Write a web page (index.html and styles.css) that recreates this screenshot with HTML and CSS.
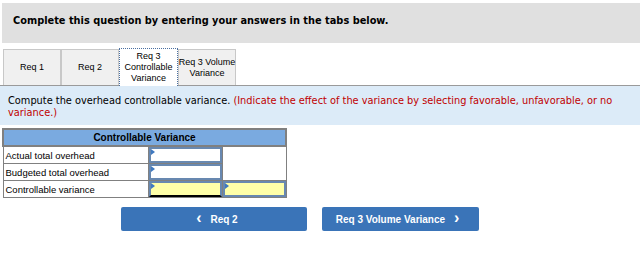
FILE: index.html
```html
<!DOCTYPE html>
<html lang="en">
<head>
    <meta charset="UTF-8">
    <title>Controllable Variance</title>
    <link rel="stylesheet" href="styles.css">
</head>
<body>
    <div class="prompt">Complete this question by entering your answers in the tabs below.</div>

    <div class="tabs">
        <div class="tab">Req 1</div>
        <div class="tab">Req 2</div>
        <div class="tab active">Req 3<br>Controllable<br>Variance</div>
        <div class="tab">Req 3 Volume<br>Variance</div>
    </div>

    <div class="instructions">
        Compute the overhead controllable variance. <span class="hint">(Indicate the effect of the variance by selecting favorable, unfavorable, or no variance.)</span>
    </div>

    <table class="variance">
        <colgroup>
            <col class="col-label">
            <col class="col-input">
            <col class="col-pick">
        </colgroup>
        <tr>
            <th colspan="3">Controllable Variance</th>
        </tr>
        <tr>
            <td class="label">Actual total overhead</td>
            <td class="cell"><div class="input"></div></td>
            <td class="empty" rowspan="2"></td>
        </tr>
        <tr>
            <td class="label">Budgeted total overhead</td>
            <td class="cell"><div class="input"></div></td>
        </tr>
        <tr>
            <td class="label">Controllable variance</td>
            <td class="cell"><div class="input total"></div></td>
            <td class="cell"><div class="input pick"></div></td>
        </tr>
    </table>

    <div class="nav">
        <button class="nav-btn prev"><span class="arrow">&lsaquo;</span> Req 2</button>
        <button class="nav-btn next">Req 3 Volume Variance <span class="arrow">&rsaquo;</span></button>
    </div>
</body>
</html>
```

FILE: styles.css
```css
* {
    margin: 0;
    padding: 0;
    box-sizing: border-box;
}

body {
    font-family: "DejaVu Sans", Verdana, sans-serif;
    color: #000;
    background: #fff;
}

.prompt {
    margin: 3px 0 0 2px;
    height: 40px;
    background: #e0e0e0;
    padding: 12px 0 0 11px;
    font-size: 9.8px;
    font-weight: bold;
}

.tabs {
    display: flex;
    align-items: flex-end;
    margin-top: 5px;
    padding-left: 3px;
    height: 38px;
    border-bottom: 1px solid #9a9a9a;
}

.tab {
    width: 58px;
    height: 36px;
    display: flex;
    align-items: center;
    justify-content: center;
    text-align: center;
    white-space: nowrap;
    font-family: "Liberation Sans", Arial, sans-serif;
    font-size: 9px;
    line-height: 11px;
    background: #f0f0f0;
    border: 1px solid #c8c8c8;
    border-bottom: none;
}

.tab.active {
    width: 59px;
    height: 38px;
    margin-bottom: -1px;
    background: #fff;
    border: 1px dotted #4a6fa0;
    border-bottom: none;
}

.instructions {
    background: #dcebf8;
    height: 39px;
    padding: 9px 8px 0;
    font-size: 9.8px;
    line-height: 12px;
}

.hint {
    color: #c00000;
}

.variance {
    margin: 3px 0 0 2px;
    width: 283px;
    table-layout: fixed;
    border-collapse: collapse;
    font-family: "Liberation Sans", Arial, sans-serif;
    font-size: 9.5px;
}

.col-label {
    width: 145px;
}

.col-input {
    width: 74px;
}

.col-pick {
    width: 64px;
}

.variance th {
    height: 17px;
    background: #7aaae0;
    border: 2px solid #808080;
    font-weight: bold;
    font-size: 10px;
}

.variance td {
    border: 1px solid #808080;
    height: 17px;
}

.variance .label {
    padding-left: 2px;
    white-space: nowrap;
}

.variance .cell {
    padding: 0;
}

.input {
    position: relative;
    height: 16px;
    border: 2px solid #6888b0;
    background: #fff;
}

.input::before {
    content: "";
    position: absolute;
    top: 0;
    left: 0;
    border-top: 3px solid transparent;
    border-bottom: 3px solid transparent;
    border-left: 4px solid #3f79c0;
}

.input.total {
    background: #ffffa8;
    border-bottom-color: #000;
}

.input.pick {
    background: #ffffa8;
}

.nav {
    display: flex;
    margin: 9px 0 0 121px;
    gap: 15px;
}

.nav-btn {
    height: 24px;
    border: none;
    border-radius: 2px;
    background: #3a74b8;
    color: #fff;
    font-family: "Liberation Sans", Arial, sans-serif;
    font-size: 10px;
    font-weight: bold;
}

.nav-btn.prev {
    width: 186px;
}

.nav-btn.next {
    width: 157px;
}

.arrow {
    font-size: 16px;
    line-height: 10px;
    margin: 0 6px;
}
```
